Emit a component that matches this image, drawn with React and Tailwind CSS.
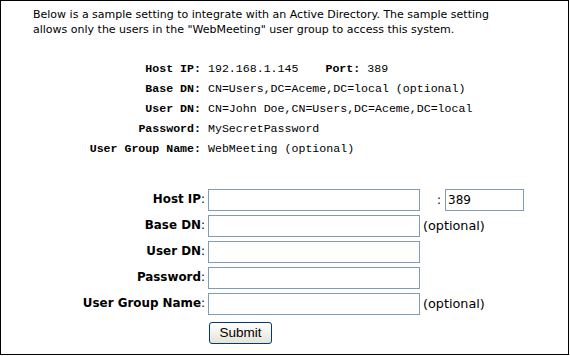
import React from 'react';

const sample = [
  { label: 'Host IP:', value: '192.168.1.145', port: '389' },
  { label: 'Base DN:', value: 'CN=Users,DC=Aceme,DC=local (optional)' },
  { label: 'User DN:', value: 'CN=John Doe,CN=Users,DC=Aceme,DC=local' },
  { label: 'Password:', value: 'MySecretPassword' },
  { label: 'User Group Name:', value: 'WebMeeting (optional)' },
];

const fields = [
  { label: 'Host IP', port: true },
  { label: 'Base DN', note: '(optional)' },
  { label: 'User DN' },
  { label: 'Password' },
  { label: 'User Group Name', note: '(optional)' },
];

const mono = { fontFamily: '"Liberation Mono", "DejaVu Sans Mono", monospace' };

function Field({ f }) {
  return (
    <div className="flex items-center h-[26px]">
      <div className="w-[174px] text-right text-[11.9px] text-black">
        <span className="font-bold">{f.label}</span>:
      </div>
      <input
        type="text"
        className="ml-[3px] w-[212px] h-[22px] border border-[#7f9db9] bg-white px-[2px] text-[12px] outline-none"
      />
      {f.port && (
        <>
          <span className="ml-[17px] text-[12px]">:</span>
          <input
            type="text"
            defaultValue="389"
            className="ml-[4px] w-[79px] h-[22px] border border-[#7f9db9] bg-white px-[2px] text-[12px] outline-none"
          />
        </>
      )}
      {f.note && <span className="ml-[3px] text-[12.8px]">{f.note}</span>}
    </div>
  );
}

export default function App() {
  return (
    <div
      className="w-[569px] h-[355px] border border-black bg-white text-black"
      style={{ fontFamily: '"DejaVu Sans", Verdana, sans-serif' }}
    >
      <p className="pl-[32px] pr-[20px] pt-[6px] text-[11px] leading-[15px]">
        Below is a sample setting to integrate with an Active Directory. The sample setting
        <br />
        allows only the users in the "WebMeeting" user group to access this system.
      </p>

      <div className="mt-[22px]" style={mono}>
        {sample.map((r) => (
          <div key={r.label} className="flex items-center h-[20px] text-[11.6px]">
            <div className="w-[200px] text-right font-bold">{r.label}</div>
            <div className="ml-[7px] whitespace-pre">{r.value}</div>
            {r.port && (
              <>
                <div className="ml-[27px] font-bold">Port:</div>
                <div className="ml-[7px]">{r.port}</div>
              </>
            )}
          </div>
        ))}
      </div>

      <form className="mt-[28px] pl-[30px]" onSubmit={(e) => e.preventDefault()}>
        {fields.map((f) => (
          <Field key={f.label} f={f} />
        ))}
        <div className="mt-[3px] pl-[178px]">
          <button
            type="submit"
            className="w-[63px] h-[22px] rounded-[3px] border border-[#003c74] bg-gradient-to-b from-white to-[#e6e3d6] text-[13.5px] leading-none"
            style={{ fontFamily: '"Liberation Sans", Arial, sans-serif' }}
          >
            Submit
          </button>
        </div>
      </form>
    </div>
  );
}
